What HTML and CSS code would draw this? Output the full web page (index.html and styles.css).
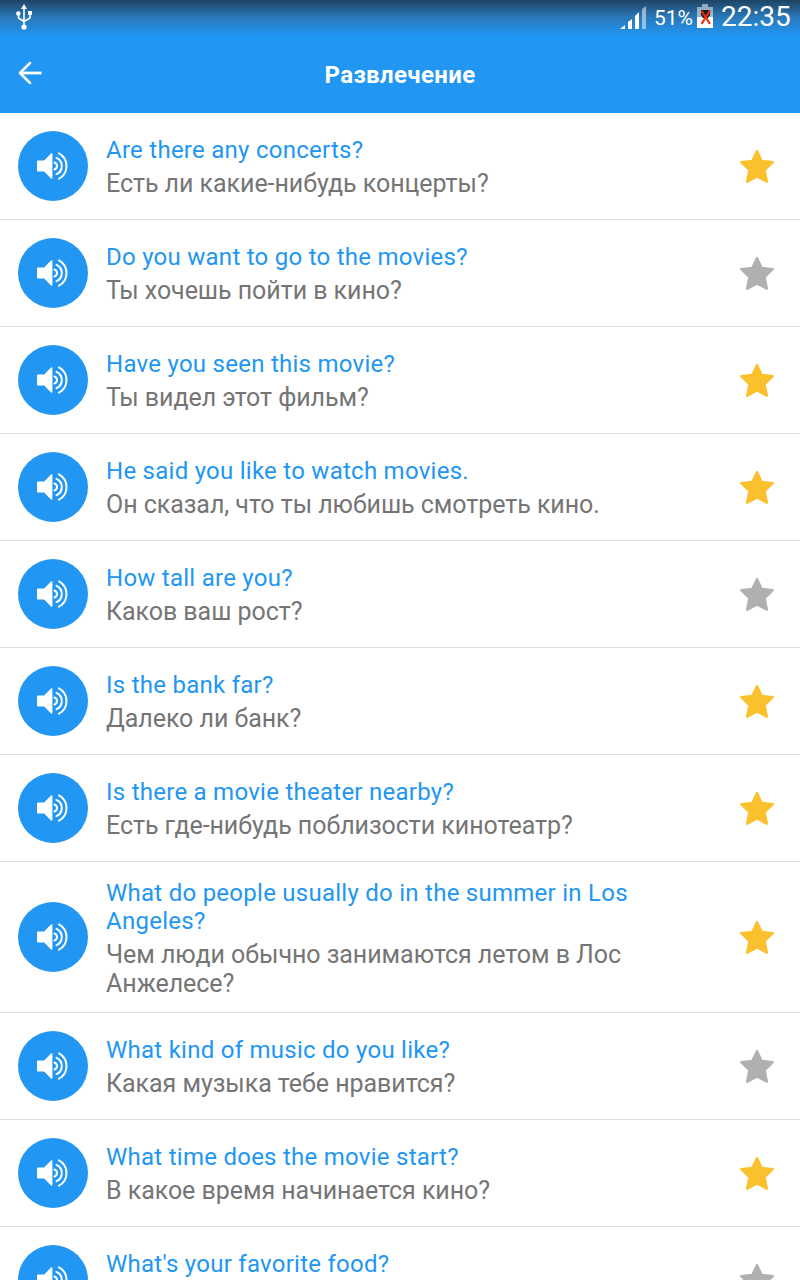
FILE: index.html
```html
<!DOCTYPE html>
<html lang="ru">
<head>
    <meta charset="UTF-8">
    <meta name="viewport" content="width=device-width, initial-scale=1.0">
    <title>Развлечение</title>
    <link rel="stylesheet" href="styles.css">
</head>
<body>
    <svg class="icon-defs">
        <symbol id="speaker" viewBox="0 0 70 70">
            <path fill="#fff" d="M20 29.500h6.200L33 22.600q1.400-1 1.400.8v23.200q0 1.800-1.400.8L26.200 40.500H20q-1 0-1-1v-9q0-1 1-1z"/>
            <path fill="none" stroke="#fff" stroke-width="2" stroke-linecap="round" d="M36.500 31.500a3.700 3.700 0 0 1 0 7M38.500 26.800a9 9 0 0 1 0 16.400M41 22.300a14.500 14.500 0 0 1 0 25.400"/>
        </symbol>
        <symbol id="star" viewBox="0 0 36 36">
            <path stroke-width="2.500" stroke-linejoin="round" d="M18 3.200l4.500 9.700 11.200 1.300-8.200 7.800 2.300 11.600L18 28.500l-9.800 5.100 2.300-11.600-8.200-7.800 11.200-1.300z"/>
        </symbol>
    </svg>

    <header class="header">
        <div class="status-bar">
            <svg class="usb" width="18" height="28" viewBox="0 0 18 28">
                <path fill="none" stroke="#fff" stroke-width="1.600" d="M9 5v18M3.500 11v4l5.500 3.500M15 10v5l-6 3.500"/>
                <path fill="#fff" d="M9 1l3 5H6zM13 8h4v4h-4z"/>
                <circle cx="3.300" cy="10.500" r="2.200" fill="#fff"/>
                <circle cx="9" cy="24" r="2.600" fill="#fff"/>
            </svg>
            <div class="status-right">
                <svg class="signal" width="28" height="26" viewBox="0 0 28 26">
                    <path fill="#fff" d="M0 24l5-4v4zM8 17l4-3v10H8zM15 11l4-4v17h-4z"/>
                    <path fill="#fff" fill-opacity=".5" d="M22 4l4-3v23h-4z"/>
                </svg>
                <span class="percent">51%</span>
                <svg class="battery" width="16" height="25" viewBox="0 0 16 25">
                    <path fill="#fff" fill-opacity=".5" d="M5 0h6v3h5v10H0V3h5z"/>
                    <path fill="#fff" d="M0 13h16v11H0z"/>
                    <path fill="#221b1b" d="M4 6h9v5l-2 3H6l-2-3z"/>
                    <path fill="none" stroke="#f0300c" stroke-width="2.200" d="M4.500 7l8.500 13M13 6.500L4.500 20"/>
                </svg>
                <span class="clock">22:35</span>
            </div>
        </div>
        <div class="toolbar">
            <svg class="back" width="24" height="24" viewBox="0 0 24 24">
                <path fill="none" stroke="#fff" stroke-width="2.500" stroke-linecap="round" stroke-linejoin="round" d="M12 2L2 12l10 10"/>
                <path stroke="#fff" stroke-width="2.800" d="M2 12h21.500"/>
            </svg>
            <h1 class="title">Развлечение</h1>
        </div>
    </header>

    <main class="phrases">
        <div class="phrase">
            <svg class="play"><use href="#speaker"/></svg>
            <div class="text">
                <p class="en">Are there any concerts?</p>
                <p class="ru">Есть ли какие-нибудь концерты?</p>
            </div>
            <svg class="star active"><use href="#star"/></svg>
        </div>
        <div class="phrase">
            <svg class="play"><use href="#speaker"/></svg>
            <div class="text">
                <p class="en">Do you want to go to the movies?</p>
                <p class="ru">Ты хочешь пойти в кино?</p>
            </div>
            <svg class="star"><use href="#star"/></svg>
        </div>
        <div class="phrase">
            <svg class="play"><use href="#speaker"/></svg>
            <div class="text">
                <p class="en">Have you seen this movie?</p>
                <p class="ru">Ты видел этот фильм?</p>
            </div>
            <svg class="star active"><use href="#star"/></svg>
        </div>
        <div class="phrase">
            <svg class="play"><use href="#speaker"/></svg>
            <div class="text">
                <p class="en">He said you like to watch movies.</p>
                <p class="ru">Он сказал, что ты любишь смотреть кино.</p>
            </div>
            <svg class="star active"><use href="#star"/></svg>
        </div>
        <div class="phrase">
            <svg class="play"><use href="#speaker"/></svg>
            <div class="text">
                <p class="en">How tall are you?</p>
                <p class="ru">Каков ваш рост?</p>
            </div>
            <svg class="star"><use href="#star"/></svg>
        </div>
        <div class="phrase">
            <svg class="play"><use href="#speaker"/></svg>
            <div class="text">
                <p class="en">Is the bank far?</p>
                <p class="ru">Далеко ли банк?</p>
            </div>
            <svg class="star active"><use href="#star"/></svg>
        </div>
        <div class="phrase">
            <svg class="play"><use href="#speaker"/></svg>
            <div class="text">
                <p class="en">Is there a movie theater nearby?</p>
                <p class="ru">Есть где-нибудь поблизости кинотеатр?</p>
            </div>
            <svg class="star active"><use href="#star"/></svg>
        </div>
        <div class="phrase">
            <svg class="play"><use href="#speaker"/></svg>
            <div class="text">
                <p class="en">What do people usually do in the summer in Los Angeles?</p>
                <p class="ru">Чем люди обычно занимаются летом в Лос Анжелесе?</p>
            </div>
            <svg class="star active"><use href="#star"/></svg>
        </div>
        <div class="phrase">
            <svg class="play"><use href="#speaker"/></svg>
            <div class="text">
                <p class="en">What kind of music do you like?</p>
                <p class="ru">Какая музыка тебе нравится?</p>
            </div>
            <svg class="star"><use href="#star"/></svg>
        </div>
        <div class="phrase">
            <svg class="play"><use href="#speaker"/></svg>
            <div class="text">
                <p class="en">What time does the movie start?</p>
                <p class="ru">В какое время начинается кино?</p>
            </div>
            <svg class="star active"><use href="#star"/></svg>
        </div>
        <div class="phrase">
            <svg class="play"><use href="#speaker"/></svg>
            <div class="text">
                <p class="en">What's your favorite food?</p>
            </div>
            <svg class="star"><use href="#star"/></svg>
        </div>
    </main>
</body>
</html>
```
FILE: styles.css
```css
:root {
    --primary: #2196f3;
    --active: #fbc02d;
    --muted: #b0b0b0;
    --text: #757575;
    --divider: #e0e0e0;
}

* {
    box-sizing: border-box;
}

body {
    margin: 0;
    height: 1280px;
    overflow: hidden;
    background-color: #fff;
    font-family: Roboto, sans-serif;
}

.icon-defs {
    display: none;
}

.header {
    height: 113px;
    background: linear-gradient(#1e4362 0, #2a78b8 17px, var(--primary) 36px);
    color: #fff;
}

.status-bar {
    height: 33px;
    padding: 0 8px 0 15px;
    display: flex;
    justify-content: space-between;
}

.usb {
    margin-top: 3px;
}

.status-right {
    display: flex;
    align-items: flex-start;
}

.signal {
    margin: 5px 6px 0 0;
}

.percent {
    width: 43px;
    margin-top: 5px;
    font-size: 21px;
    line-height: 26px;
}

.battery {
    margin-top: 4px;
}

.clock {
    width: 71px;
    margin-left: 8px;
    font-size: 28px;
    line-height: 33px;
    white-space: nowrap;
}

.toolbar {
    height: 80px;
    padding: 0 18px;
    display: grid;
    grid-template-columns: 24px 1fr 24px;
    align-items: center;
}

.title {
    margin: 3px 0 0;
    text-align: center;
    font-size: 24px;
    line-height: 28px;
    font-weight: bold;
    letter-spacing: 0.35px;
}

.phrase {
    display: flex;
    align-items: center;
    min-height: 107px;
    padding: 13px 25px 13px 18px;
    border-bottom: 1px solid var(--divider);
}

.play {
    flex: none;
    width: 70px;
    height: 70px;
    border-radius: 50%;
    background-color: var(--primary);
}

.text {
    flex: 1;
    min-height: 69px;
    margin: 0 70px 0 18px;
    padding: 4px 0 1px;
}

.en, .ru {
    margin: 0;
}

.en {
    font-size: 24px;
    line-height: 28px;
    letter-spacing: 0.26px;
    color: var(--primary);
}

.ru {
    margin-top: 5px;
    font-size: 25px;
    line-height: 29px;
    letter-spacing: -0.05px;
    color: var(--text);
}

.star {
    flex: none;
    width: 36px;
    height: 36px;
    fill: var(--muted);
    stroke: var(--muted);
}

.star.active {
    fill: var(--active);
    stroke: var(--active);
}
```
